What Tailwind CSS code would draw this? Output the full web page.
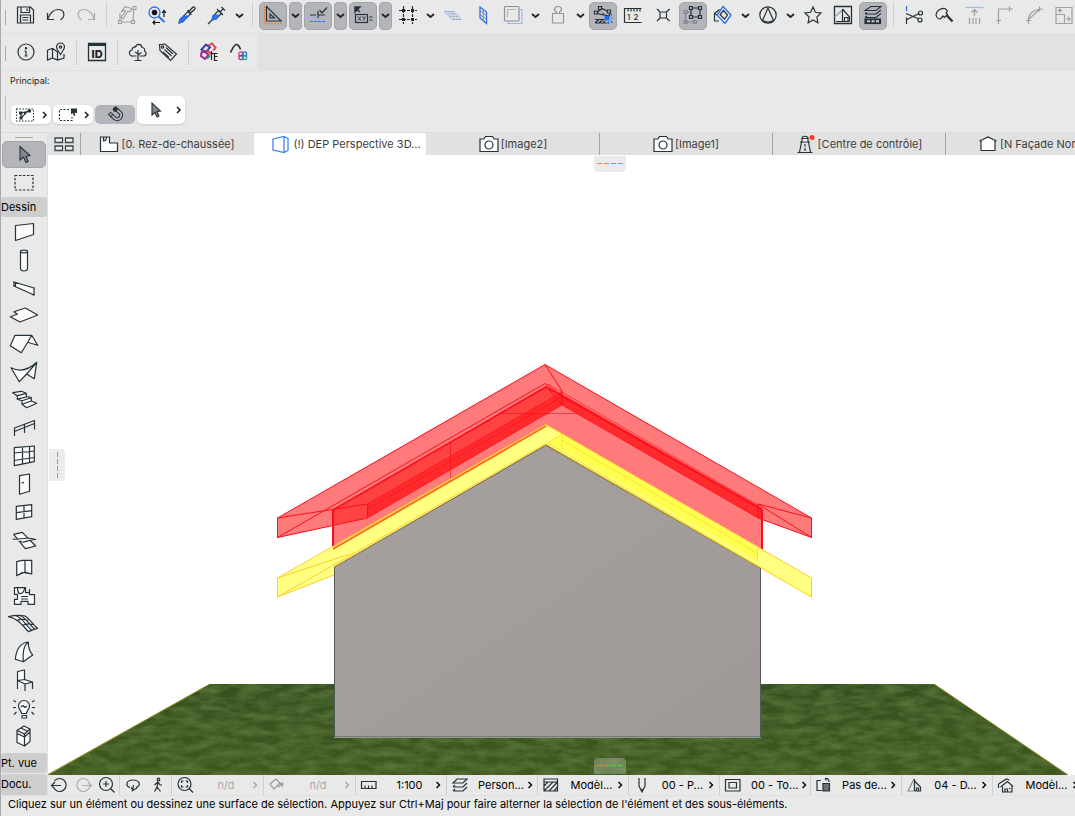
<!DOCTYPE html>
<html lang="fr">
<head>
    <meta charset="UTF-8">
    <meta name="viewport" content="width=device-width, initial-scale=1.0">
    <title>DEP Perspective 3D</title>
    <script src="https://cdn.jsdelivr.net/npm/@tailwindcss/browser@4"></script>
</head>
<body class="h-screen overflow-hidden bg-[#e9e9e9] font-['Inter',sans-serif] text-[11px] leading-4 text-[#262626]">
<div class="flex h-screen flex-col border-l border-[#a9a9ab]">

    <!-- Toolbars -->
    <header class="shrink-0">
        <div id="mainBar" class="flex h-[34px] items-start gap-0.5 overflow-hidden border-b border-[#e1e1e1] pt-0.5 pl-1"></div>
        <div class="flex h-[37px] bg-[#e2e2e2]">
            <div id="subBar" class="flex items-center gap-0.5 border-b border-[#e1e1e1] bg-[#e9e9e9] pt-0.5 pr-1 pl-1"></div>
        </div>
        <div class="flex h-[62px] flex-col justify-between border-b border-[#dcdcdc] pt-0.5 pb-2">
            <p class="pl-[9px] text-[9px] leading-4">Principal:</p>
            <div class="flex items-end">
                <span class="mr-[5px] ml-1 h-6 w-px self-start bg-[#bdbdbd]"></span>
                <div class="flex items-end gap-0.5">
                    <button aria-label="Sélection rapide" class="flex h-[19px] w-10 items-center justify-between rounded-[5px] bg-white pr-px pl-1 shadow-sm">
                        <svg class="h-5 w-5" viewBox="0 0 20 20" fill="none" stroke="#26323a" stroke-width="1.1"><rect x="1.500" y="4" width="17" height="12" stroke-dasharray="1.5 1.5"/><path d="M6 13V8l4-1 5-1M6 13l6-6"/><path d="M4 6.500h3.500v3H4zM12.500 4.500h3.500v3h-3.500zM4.500 11.500h3v3h-3zM9 7h2v2H9z" fill="#26323a" stroke="none"/></svg>
                        <svg class="h-3 w-3" viewBox="0 0 12 12" fill="none" stroke="#222" stroke-width="1.6"><path d="M5 3l3 3-3 3"/></svg>
                    </button>
                    <button aria-label="Zone de sélection" class="flex h-[19px] w-10 items-center justify-between rounded-[5px] bg-white pr-px pl-1 shadow-sm">
                        <svg class="h-5 w-5" viewBox="0 0 20 20" fill="none" stroke="#26323a" stroke-width="1.2"><path d="M12 4.500H2.500v11H15V12" stroke-dasharray="2 1.500"/><path d="M14 3.500h6v5l-1.500-1-2 1.500z" fill="#26323a" stroke="none"/><path d="M14 3.500v6l1.500-1.500 1.500 3 1.500-.8-1.500-2.700h2z" fill="#26323a" stroke="none"/></svg>
                        <svg class="h-3 w-3" viewBox="0 0 12 12" fill="none" stroke="#222" stroke-width="1.6"><path d="M5 3l3 3-3 3"/></svg>
                    </button>
                    <button aria-label="Magnétisme" class="flex h-[19px] w-10 items-center justify-center rounded-[5px] bg-[#b4b5bb]">
                        <svg class="h-5 w-5" viewBox="0 0 20 20" fill="none"><g transform="rotate(-48 10 10)"><path d="M7.500 4.500V12a3.800 3.800 0 0 0 7.600 0V4.500" stroke="#26323a" stroke-width="4"/><path d="M7.500 5.500V12a3.800 3.800 0 0 0 7.600 0V5.500" stroke="#b4b5bb" stroke-width="2"/><path d="M5.500 8h4M13 8h4" stroke="#26323a"/></g><circle cx="10" cy="4.500" r="2.200" fill="#26323a"/></svg>
                    </button>
                    <button aria-label="Flèche" class="flex h-7 w-12 items-center justify-between rounded-[5px] bg-white pr-px pl-2.5 shadow-sm">
                        <svg class="h-5 w-5" viewBox="0 0 20 20" fill="#85888b" stroke="#26323a" stroke-width="1.1"><path d="M5 3v12l3-2.500 2 4.500 2-1-2-4.500 3.500-.5z"/></svg>
                        <svg class="h-3 w-3" viewBox="0 0 12 12" fill="none" stroke="#222" stroke-width="1.6"><path d="M5 3l3 3-3 3"/></svg>
                    </button>
                </div>
            </div>
        </div>
    </header>

    <div class="flex min-h-0 flex-1">
        <!-- Toolbox -->
        <aside class="flex w-[47px] shrink-0 flex-col border-r border-[#dedede]">
            <span class="mt-1 mb-[3px] h-px w-[18px] self-center bg-[#a9a9a9]"></span>
            <button aria-label="Flèche" class="mx-px flex h-[27px] shrink-0 items-center justify-center rounded-[5px] border border-[#a4a5aa] bg-[#b4b5bb]">
                <svg class="h-5 w-5" viewBox="0 0 20 20" fill="#85888b" stroke="#26323a" stroke-width="1.1"><path d="M6 1.500v13.500l3.500-3 2.500 5.500 2.200-1L12 11.500l4-1z"/></svg>
            </button>
            <button aria-label="Zone de sélection" class="flex h-[29px] shrink-0 items-center justify-center">
                <svg class="h-5 w-5" viewBox="0 0 20 20" fill="none" stroke="#26323a" stroke-width="1.2"><rect x="1" y="2.500" width="18" height="14.500" stroke-dasharray="2.500 1.500"/></svg>
            </button>
            <h2 class="h-5 shrink-0 rounded-[3px] bg-[#cecece] leading-5 text-black">Dessin</h2>
            <div id="toolbox" class="flex flex-col pt-px"></div>
            <h2 class="mt-auto mb-px h-5 shrink-0 rounded-[3px] bg-[#cecece] leading-5 text-black">Pt. vue</h2>
            <h2 class="h-[21px] shrink-0 rounded-[3px] bg-[#cecece] leading-5 text-black">Docu.</h2>
        </aside>

        <div class="flex min-w-0 flex-1 flex-col">
            <nav id="tabs" class="flex h-[22px] shrink-0 overflow-hidden bg-[#e1e1e1]"></nav>

            <!-- 3D view -->
            <main class="relative min-h-0 flex-1 bg-white">
                <svg class="h-full w-full" viewBox="48 155 1027 620" preserveAspectRatio="xMidYMax slice" stroke-linejoin="round">
                    <defs>
                        <linearGradient id="ground" x1="0" y1="0" x2="0" y2="1">
                            <stop offset="0" stop-color="#365021"/>
                            <stop offset="1" stop-color="#3e5920"/>
                        </linearGradient>
                        <linearGradient id="gable" x1="0" y1="0" x2="1" y2="1">
                            <stop offset="0" stop-color="#a6a09f"/>
                            <stop offset="1" stop-color="#9f9998"/>
                        </linearGradient>
                        <filter id="grass" x="0" y="0" width="1" height="1">
                            <feTurbulence type="fractalNoise" baseFrequency=".05 .14" numOctaves="4" seed="4"/>
                            <feColorMatrix values="0 0 0 0 .14  0 0 0 0 .24  0 0 0 0 .06  0 1 0 0 -.3"/>
                            <feComposite in2="SourceGraphic" operator="in"/>
                            <feMerge><feMergeNode in="SourceGraphic"/><feMergeNode/></feMerge>
                        </filter>
                    </defs>
                    <path d="M210 684H934L1068 775H48z" fill="url(#ground)" filter="url(#grass)"/>
                    <path d="M48 774.500L210 684M934 684L1068 775" fill="none" stroke="#8b871f"/>

                    <!-- upper roof and gable -->
                    <path d="M277.500 518L545 364.500 811.500 518v19.500L758 518 562 405 367.500 518 277.500 537.500z" fill="#ff7b7b"/>
                    <path d="M333 510L546 386 762 509v40L546 425 333 549z" fill="#ff7b7b"/>
                    <path d="M333 510L546 386 562 396v9L367.500 518 333 525z" fill="#ff4242"/>
                    <path d="M367.500 504L562 392v13L367.500 518z" fill="#ff2a2c"/>
                    <path d="M562 394L762 508v11l-4-1L562 405z" fill="#ff2a2c"/>
                    <g fill="none" stroke="#fc0d1b">
                        <path d="M277.500 518L545 364.500 811.500 518v19.500L758 518M277.500 518v19.500L367.500 518M277.500 537.500L545 383.500 562 395"/>
                        <path d="M277.500 518L367.500 504v14M811.500 537.500L758 504 811.500 518M545 364.500L562 391v14L546 386M758 504v14"/>
                        <path d="M333 510L546 387 762 509.500" stroke-width="1.5"/>
                        <path d="M548 384L758 505M367.500 504L562 392M367.500 509L562 397M450.500 443v35M502 413.500h76" stroke-opacity=".6"/>
                        <path d="M367.500 518L562 405 758 518" stroke-opacity=".7"/>
                        <path d="M333 509.500v40M762 509.500v40" stroke-width="2"/>
                    </g>

                    <!-- lower roof -->
                    <path d="M277.500 578L546 424.500v20L334 566v9L277.500 597z" fill="#ffff80"/>
                    <path d="M277.500 578L546 424.500M277.500 578v19L546 444M277.500 597L334 575M277.500 578L350 554" fill="none" stroke="#ffcc33"/>
                    <path d="M334.500 737V567L546 445 760.500 568v169z" fill="url(#gable)" stroke="#555957"/>
                    <path d="M334 737.500h427" stroke="#8ba08e"/>
                    <path d="M334 566L546 443.500" stroke="#ffe04c" stroke-width="1.5"/>
                    <path d="M546 424.500L811.500 578v19L546 444z" fill="#ffff80"/>
                    <path d="M562 434L757.500 548v13L562 449l-14-6z" fill="#ffff50"/>
                    <path d="M333 549L546 426" stroke="#ff6a24" stroke-width="2"/>
                    <g fill="none" stroke="#ffc82e">
                        <path d="M333 547L546 424.500 811.500 578v19L546 444"/>
                        <path d="M548 443L562 434v15M562 440L757.500 553M757.500 548v13M548 443L811.500 597" stroke="#ffe133"/>
                    </g>
                    <path d="M550 448L758 567" stroke="#9c9a3c" stroke-opacity=".7"/>
                </svg>

                <!-- panel handles over the view -->
                <span class="absolute top-px left-1/2 ml-12 flex h-4 w-8 -translate-x-1/2 items-center justify-center rounded-b-[4px] bg-[#ebebeb]">
                    <svg class="h-1 w-[26px]" viewBox="0 0 26 4" stroke="#f5822f"><path d="M0 1.500h26" stroke-dasharray="5 2"/></svg>
                </span>
                <span class="absolute bottom-px left-1/2 ml-12 flex h-4 w-8 -translate-x-1/2 items-center justify-center rounded-t-[4px] bg-white/25">
                    <svg class="h-1 w-[26px]" viewBox="0 0 26 4" stroke="#f5822f"><path d="M0 1.500h26" stroke-dasharray="5 2"/></svg>
                </span>
                <span class="absolute top-1/2 left-px -mt-4 flex h-8 w-4 items-center justify-center rounded-r-[4px] bg-[#ebebeb]">
                    <svg class="h-[26px] w-1" viewBox="0 0 4 26" stroke="#f5822f"><path d="M2.500 0v26" stroke-dasharray="5 2"/></svg>
                </span>
            </main>

            <!-- Quick options -->
            <div id="quickBar" class="flex h-5 shrink-0 overflow-hidden"></div>
        </div>
    </div>

    <footer class="h-[21px] shrink-0 border-t border-[#e0e0e0] pl-[7px] leading-4 text-black">Cliquez sur un élément ou dessinez une surface de sélection. Appuyez sur Ctrl+Maj pour faire alterner la sélection de l'élément et des sous-éléments.</footer>
</div>

<script>
    const down = '<path d="M3 5l3.500 3L10 5" stroke-width="1.8" stroke="#222"/>';

    // [type, label, drawing]: b button, on pressed button, d drop-down, ond pressed drop-down, s separator
    const mainBar = [
        ['b', 'Enregistrer', '<path d="M1.500 2h13l3 3v13h-16zM5 2v5.500h8.500V2M11 3.500v2.500M4.500 18v-8h10v8M6.500 12.500h6M6.500 15h6"/>'],
        ['b', 'Annuler', '<path d="M1.500 8v6.500H8M1.500 14.500C4 8 7.500 4.500 12 4.500c6.500 0 8 6.500 2.500 10.500"/>'],
        ['b', 'Rétablir', '<path stroke="#a9a9a9" d="M18.500 8v6.500H12M18.500 14.500C16 8 12.500 4.500 8 4.500c-6.500 0-8 6.500-2.500 10.500"/>'],
        ['s'],
        ['b', 'Modifier', '<g stroke="#a0a0a0"><path d="M3 8v9h13L17 3"/><path d="M4 7l4-5 4 .5 3 2-2 2.500-2-1L6 14l-2-1.500L8.500 6 7 5.500z" fill="#e9e9e9"/><path d="M1.500 15.500h3v3h-3zM14.500 15.500h3v3h-3zM16 1.500h3v3h-3z" fill="#e9e9e9"/></g>'],
        ['b', 'Rechercher', '<circle cx="7.500" cy="7.500" r="5.500" stroke="#2f6fe8" stroke-width="1.3"/><path d="M11.500 11.500l6 5.500" stroke="#2f6fe8" stroke-width="2"/><circle cx="7.500" cy="7.500" r="2.800" fill="#111" stroke="none"/><path d="M17 12V6M15 8l2-2.500L19 8M6 17.500h7M8 15.500l-2 2 2 2" stroke="#111"/>'],
        ['b', 'Pipette', '<path d="M2 18l1-3.500 8-8 2.500 2.500-8 8z"/><path d="M2 18l1-3.500 3.500-3.500H11l-5.500 6z" fill="#2f6fe8" stroke="#2f6fe8"/><path d="M10.500 5l4.500 4.500M12 6.500l3.500-4c1.500-1.500 3.500.5 2 2l-4 3.500z" stroke-width="1.3"/>'],
        ['b', 'Seringue', '<path d="M1 19l4-4M5 15l1-4 5.500-5.500 3 3L9 14z"/><path d="M5 15l1-4 2-1h4l-3 4z" fill="#2f6fe8" stroke="#2f6fe8"/><path d="M10 4l6 6M13 7l3.500-3.500M14.500 2l3.500 3.500"/>'],
        ['d', 'Options de transfert'],
        ['s'],
        ['on', 'Lignes guides', '<path d="M1.500 1v17.500h17.500" stroke="#f5822f" stroke-width="1.4" stroke-dasharray="2 1"/><path d="M3.500 1.500v14.500H18z"/><path d="M7 9v4h4.500z"/>'],
        ['ond', 'Options des lignes guides'],
        ['on', 'Accrochage', '<path d="M2 10h6M10 6v7M10 10H17M11.500 5l2.500 3L19 2.500"/><path d="M2 16.500h16" stroke="#2f6fe8" stroke-dasharray="3 1"/>'],
        ['ond', 'Options d’accrochage'],
        ['on', 'Coordonnées', '<path d="M2 2h5L2 7zM3.500 3.500L7 7" fill="#222" stroke-width="1.4"/><rect x="2.500" y="9.500" width="12" height="8"/><path d="M16.500 12h3M16.500 15h3"/><path d="M5 11.500l3 4M8 11.500l-3 4M9.500 11.500l1.500 2 1.500-2M11 13.500v2" stroke-width="1"/>'],
        ['ond', 'Options des coordonnées'],
        ['b', 'Grille', '<path d="M5.500 1v18M14.500 1v18M1 5.500h18M1 14.500h18" stroke-dasharray="3 1"/><path d="M4 4h3v3H4zM13 4h3v3h-3zM4 13h3v3H4zM13 13h3v3h-3z" fill="#222" stroke="none"/>'],
        ['d', 'Options de grille'],
        ['b', 'Plan de travail', '<g stroke-width="1"><path d="M1.500 6.500h9.500l7 8H9z" stroke="#8fb0ec"/><path d="M4 9h9M6.500 11.500h9.500M5 6.500l7 8M8 6.500l7 8" stroke="#b3b8c2"/></g>'],
        ['b', 'Plan vertical', '<path d="M7 2l6.500 5v11.500L7 13z" stroke="#2f6fe8" stroke-width="1.3"/><path d="M10.200 4.500v11M7 5.500l6.500 5M7 9.500l6.500 5" stroke="#7c8795" stroke-width="1"/>'],
        ['b', 'Référence', '<path d="M17 4.500h2v14H5v-2" stroke="#9db8e8"/><rect x="1.500" y="1.500" width="14.500" height="14.500" rx="1" stroke="#8d9195"/><path d="M4.500 12.500V4.500h8" stroke="#b5b5b5"/>'],
        ['d', 'Options de référence'],
        ['b', 'Gravité', '<path d="M4.500 8.500h11V18h-11zM8.500 8.500V7C5 5.500 6.500 1.500 10 1.500S15 5.500 11.500 7v1.500" stroke="#969696"/>'],
        ['d', 'Options de gravité'],
        ['on', 'Édition', '<path d="M3.500 8L9 3.500l8 4-1 3.500-12-2.500M9 9.500l2-1M2 14.500h9.500M2 18h12.500M2 18l4-3.500M6 18l4-3.500M10 18l2-2"/><path d="M1.500 6h3v3h-3zM5.500 1.500h3v3h-3zM14.500 5h3v3h-3z" fill="#b4b5bb"/><path d="M11.500 11h5v4.500h-5z" fill="#1d6ff2" stroke="none"/><path d="M15.500 16.500v2.500M18 13h2M17.500 16l2 2M17.500 10.500l1.500-1.500" stroke="#1d6ff2"/>'],
        ['b', 'Mesurer', '<path d="M1.500 17.500V3.500h17M5 3.500v3M8 3.500v3M11 3.500v3M14 3.500v3M17 3.500v3M1.500 17.500h17"/><text x="4" y="15" font-size="8" font-weight="500" fill="#26323a" stroke="none">1</text><text x="10.500" y="15" font-size="8" font-weight="500" fill="#26323a" stroke="none">2</text>'],
        ['b', 'Point magique', '<rect x="7" y="7" width="6.500" height="6" rx="1"/><path d="M4 4l3 3M16.500 4l-3 3M4 16l3-3M16.500 16l-3-3"/>'],
        ['on', 'Grouper', '<g stroke="#84878b"><path d="M2.500 8v9h10M2.500 7H8"/><path d="M1 5.500h3v3H1zM1 15.500h3v3H1zM10.500 15.500h3v3h-3z"/></g><path d="M8 3h9v9H8z"/><path d="M6.500 1.500h3v3h-3zM15.500 1.500h3v3h-3zM6.500 10.500h3v3h-3zM15.500 10.500h3v3h-3z" fill="#b4b5bb"/>'],
        ['b', 'Coupe 3D', '<path d="M1.500 16V8.500l5-4M1.500 16H6M1.500 8.500L4 10"/><path d="M10 1.500l8 8.500-6 8.500L4 10z" stroke="#2f6fe8" stroke-width="1.4"/><path d="M10.500 5.500l4 4.500-3 4L7 9.500z"/>'],
        ['d', 'Options de coupe'],
        ['b', 'Cône', '<circle cx="10" cy="10" r="8.200"/><path d="M10 3L4.500 15.500C8 17.500 12 17.500 15.500 15.500z"/>'],
        ['d', 'Options de cône'],
        ['b', 'Favoris', '<path d="M10 2l2.400 5.300 5.600.7-4.100 4 1 5.800L10 15l-4.900 2.800 1-5.800L2 8l5.600-.7z"/>'],
        ['b', 'Rendu', '<path d="M1.500 1.500h17v17h-17z" stroke-width="1.3"/><path d="M1.500 12L9 5.500" stroke="#9a9a9a"/><path d="M3 16.500h13.500M9.500 4v12.500M9.500 4l7 8v4.500M11.500 16.500v-4h3.500v4"/>'],
        ['on', 'Calques', '<g stroke-width="1.1"><path d="M2 5.500h11l5-4H8zM2 8.500l2-1M2 9h11l5-4M2 12.500h11l5-4M2 12.500l2-1.500"/></g><rect x="2" y="14" width="15.500" height="4.500" fill="#26323a"/><path d="M4 15.300h3v2H4zM8.500 15.300h3v2h-3zM13 15.300h3v2h-3z" fill="#ccc" stroke="none"/>'],
        ['s'],
        ['b', 'Couper', '<path d="M2.500 1v5" stroke="#2f6fe8"/><path d="M2.500 12.500v6.500M2 8.500L15 14M2 15L15 8.500"/><circle cx="16.500" cy="8" r="2"/><circle cx="16" cy="15" r="2"/>'],
        ['b', 'Hache', '<path d="M2 10C2.500 6 6 3 11 3.500L13.500 6 12 8l1.500 1.500-3 3L9 11 6.500 14C4 14 2.500 12.500 2 10z"/><path d="M12.500 10l6 6.500" stroke-width="2.4"/>'],
        ['b', 'Ajuster', '<path d="M1.500 2.500h18" stroke="#9db8e8"/><path d="M10.500 11V4.500M7.500 7.500l3-3 3 3M5.500 13v6M9 13v6M12 13v6M15.500 13v6" stroke="#a0a0a0"/>'],
        ['b', 'Intersection', '<path d="M4.500 19V4H19M2 15.500h5M15.500 1.500v5" stroke="#a0a0a0"/>'],
        ['b', 'Raccord', '<path d="M4.500 19v-4C4.500 9 9 4 19 4M2 15.500h5M15.500 1.500v5M5 14L16 4" stroke="#a0a0a0"/>'],
        ['b', 'Redimensionner', '<path d="M2 2.500h16v16H2zM2 9.500h8.500v9M6 8V4M4 6l2-2 2 2M12 14h4M14 12l2 2-2 2" stroke="#a0a0a0"/>']
    ];

    const subBar = [
        ['b', 'Informations', '<circle cx="10" cy="10" r="8"/><path d="M10 9v5M8.500 9H10M8.500 14h3"/><circle cx="10" cy="6.200" r=".6" fill="#26323a"/>'],
        ['b', 'Localisation', '<path d="M1.500 8L6.500 6.500 11 9.500h1M1.500 8v10l5-2 5 2 6.500-2v-4M6.500 6.500V16M11.500 9.500V18"/><path d="M14.500 12.500C12 8.500 10.500 7 10.500 5a4 4 0 0 1 8 0c0 2-1.500 3.500-4 7.500z"/><circle cx="14.500" cy="5" r="1.200"/>'],
        ['s'],
        ['b', 'Identifiant', '<path d="M1.500 1.500h17v17h-17z" stroke-width="1.300"/><path d="M1.500 3h17" stroke-width="2"/><text x="4.500" y="15.500" font-size="11" font-weight="800" fill="#222" stroke="none">ID</text>'],
        ['s'],
        ['b', 'Arbre', '<path d="M8.500 14H5a3 3 0 0 1-1-6c0-2 2-3.500 3.500-3 1-3.500 6-3.500 6.500.5 2.500 0 3 2 2.500 3.500 2.500 1 2 5-1 5h-4"/><path d="M10 8v10M10 12l-3-2M10 13l3.500-2.500M6.500 18.500h7"/>'],
        ['b', 'Étiquette', '<path d="M1.500 2.500L7 2l11.500 10-6 6.500L2 8.500z"/><circle cx="4.500" cy="5" r="1.200"/><path d="M8 5.500l7 6.500M6.500 7.500l7 6.500M5 10l6 5.500"/>'],
        ['s'],
        ['b', 'Structure', '<g stroke-width="2"><path d="M2.500 7.500l4.500-5 4 3-4.500 5z" stroke="#3a3f9e"/><path d="M9.500 3.500l3.500-2 3.500 4-2 3" stroke="#e8404e"/><path d="M2.500 10.500L2 14l4 3 3.500-4L6 9z" stroke="#a52a8e"/><path d="M8 8l4 4" stroke="#e8404e"/><path d="M8 16.500l3-3" stroke="#1d9a9a"/></g><path d="M12.500 9v9M12.500 11.500h6M15.500 11.500v7h3M15.500 14.500h3" stroke="#222"/>'],
        ['b', 'Paramétrique', '<path d="M1.500 10.500C3.500 7 5 2.500 7.500 2.500S10 4 11.500 7.500" stroke-width="1.6"/><g stroke-width="1.2"><circle cx="12" cy="12" r="2.200" stroke="#e8404e"/><circle cx="15.500" cy="12" r="2.200" stroke="#2f6fe8"/><circle cx="12" cy="15.500" r="2.200" stroke="#a52a8e"/><circle cx="15.500" cy="15.500" r="2.200" stroke="#1d9a9a"/></g>']
    ];

    function renderBar(id, items) {
        const handle = '<span class="mr-1 h-[15px] w-px shrink-0 self-center bg-[#a9a9a9]"></span>';
        document.getElementById(id).innerHTML = handle + items.map(([type, label, art]) => {
            if (type === 's') return '<span class="flex h-6 w-[9px] shrink-0 justify-center"><i class="h-full w-px bg-[#cfcfcf]"></i></span>';
            const pressed = type.startsWith('on') ? 'border-[#a4a5aa] bg-[#b4b5bb]' : 'border-transparent';
            if (type.endsWith('d')) return `<button aria-label="${label}" class="flex h-7 w-[13px] shrink-0 items-center justify-center rounded-[4px] border pb-0.5 ${pressed}"><svg class="h-[13px] w-[13px] shrink-0" viewBox="0 0 13 13" fill="none">${down}</svg></button>`;
            return `<button aria-label="${label}" class="flex h-7 w-7 shrink-0 items-center justify-center rounded-[5px] border pb-0.5 ${pressed}"><svg class="h-5 w-5 shrink-0" viewBox="0 0 20 20" fill="none" stroke="#26323a" stroke-width="1.2">${art}</svg></button>`;
        }).join('');
    }

    const tools = [
        ['Mur', '<path d="M7.500 7.500L25.500 5.500v11L7.500 22.500z"/>'],
        ['Poteau', '<path d="M12.500 5.500V22c0 4 7 4 7 0V5.500"/><ellipse cx="16" cy="5.500" rx="3.500" ry="1.300"/>'],
        ['Poutre', '<path d="M6 8l20 6v7L6 12zM5 8h2M5 12h3M24.500 14H27M24.500 21H27M7.500 8.500v4"/>'],
        ['Dalle', '<path d="M2.300 14.700l7-2.400L6 9.700 17.300 6l12.400 7L12 20z"/>'],
        ['Toit', '<path d="M7 5.300h16.700l6 10-10-3-6.400 10.400-11-7zM23.700 5.300l-4 7"/>'],
        ['Coque', '<path d="M3 9.700c8 4 17 3 25.700-5.400l-2.400 16.400-7.600-4.700-7.400 7.700zM28.700 4.300l-10 11.700"/>'],
        ['Escalier', '<path d="M4.700 6.700l8.600-1.400 5 2-9 2.400zM9.300 9.700v3.500l9-2.200V7.300M9.300 13.200l4.700 1.500 9.300-3-5-1.200M14 14.700v3.600l9.300-3.300v-3.300M14 18.300l4.700 3.400 10-4.400-5.400-2.300"/>'],
        ['Garde-corps', '<path d="M6.500 22v-8L26.500 6.500v9M6.500 17.500L26.500 9.500M16.500 10v9" fill="none"/>'],
        ['Mur-rideau', '<path d="M6.300 5.700L26.300 4v15.700l-20 4zM14.500 5v17M21.500 4.500v16M6.300 11l20-2M6.300 18.500l20-3"/>'],
        ['Porte', '<path d="M11.500 5.700l10-1.700v17.300l-10 3zM13.500 13l2.500-.7"/>'],
        ['Fenêtre', '<path d="M8.300 8.300L23.700 6.700v12L8.300 21.300zM16 7.500v12.500M8.300 14.700l15.400-2"/>'],
        ['Lucarne', '<path d="M5.700 8.300l8.600-2 13.400 13.700-10.400 2.700z"/><path d="M4.700 13c7 1.500 12-3 23 .5-8-.5-12 5-16 1.500"/>'],
        ['Fenêtre d’angle', '<path d="M8.700 7.700l5.600-1.400h9.400V20l-9.400-1.500-5.600 3.200zM17 6.300v11.500M8.700 21.700L17 18l6.700 2"/>'],
        ['Zone', '<path d="M6.500 5.700h11v5h4v-3h0v5h5v9.600h-6.500v-3h-7v3H6.500v-5h3v-5h-3z"/><path d="M9.500 5.700c0 4 1.500 6 3 6s4-2 4-6M13 14.500h7M13 17h7" fill="none"/>'],
        ['Maillage', '<path d="M.5 6.700C7 5 12 5 17 6c5 3 8 9 12.500 12.300-4 .7-6 2-9 3.400C15 16 10 8.500.5 6.700z"/><path d="M8.500 10.500c4-1.500 8-1.500 12-.5M14 15.500c4-2 7-2 11-1M7.500 5.500c7 2 9 9 16 14.500M12 5.500c6 2 8 8 14.500 13.500" fill="none"/>'],
        ['Forme', '<path d="M20.300 4c-8 1-12 6-13 17.300l8 2.400 9.400-6.700c-3-3-4.400-7-4.400-13zM20.300 4c-5 4-6 10-5 19.700"/>'],
        ['Objet', '<path d="M9.500 23V5.500l7-1.500v10M9.500 14.500l7-1 8 2.500-7.500 2zM17 18v7M24.500 16v7M9.500 14.500L17 18"/>'],
        ['Lampe', '<path d="M13.500 19.500c0-3-3-4-3-7.500a5.500 5.500 0 0 1 11 0c0 3.500-3 4.500-3 7.500z"/><path d="M14 21.500h4.500v2.500H14zM13 13l2-1.500 2 2 2-1.500M8 8L5.500 6.500M24 8l2.500-1.500M8 13.500H5M24 13.500h3M8.500 18L6 20.500M23.500 18l2.500 2.500"/>'],
        ['Équipement', '<path d="M9 8.500l7-4.500 6 3v12.500l-5.500 4.500L9 20.500zM9 8.500l7.500 3.500 5.500-5M16.500 12v12M9 11.500l7.500 3.500 5.500-5M13 6l6 3"/>']
    ];
    document.getElementById('toolbox').innerHTML = tools.map(([label, art]) =>
        `<button aria-label="${label}" class="flex h-7 items-center justify-center"><svg class="h-7 w-8" viewBox="0 0 32 28" fill="#fafafa" stroke="#26323a" stroke-width="1.2" stroke-linejoin="round">${art}</svg></button>`
    ).join('');

    const camera = '<path d="M1 5h4l1.500-2.500h7L15 5h4v12.500H1z"/><circle cx="10" cy="11" r="4"/>';
    const tabs = [
        ['[0. Rez-de-chaussée]', '<path d="M1.500 3h9v6h8v8.500h-17zM4.500 3v4c2 0 3-1.500 3-4"/>'],
        ['(!) DEP Perspective 3D...', '<path d="M2 5l11-2.500v16L2 16zM13 2.500l4 2v12l-4 2" stroke="#2f78e8"/>'],
        ['[Image2]', camera],
        ['[Image1]', camera],
        ['[Centre de contrôle]', '<path d="M5.500 8.500L3.500 18M12.500 8.500l2 9.500M1.500 18.500h15M4 8h10M6 8V4.500h6V8M6 4.500c0-3 6-3 6 0M9 10v2.500M9 14v3"/><circle cx="16" cy="3.500" r="2.500" fill="#fb3b22" stroke="none"/>'],
        ['[N Façade Nord]', '<path d="M1.500 7L10 3l8.500 4H17v9.500H3V7z"/>']
    ];
    document.getElementById('tabs').innerHTML =
        '<button aria-label="Vue d’ensemble des onglets" class="flex w-8 shrink-0 items-center justify-center"><svg class="h-5 w-5" viewBox="0 0 20 20" fill="#eee" stroke="#3c464b" stroke-width="1.3"><path d="M1 4h7.500v4.500H1zM11.500 4H19v4.500h-7.500zM1 12h7.500v4.500H1zM11.500 12H19v4.500h-7.500z"/></svg></button>' +
        tabs.map(([name, art], i) => {
            const look = i === 1 ? 'bg-white border-[#e1e1e1] pl-3' : i === 2 ? 'border-transparent' : 'border-[#a2a2a2]';
            return `<a href="#" class="flex w-[173px] shrink-0 items-center justify-center gap-0.5 border-l whitespace-nowrap text-[#3d3d3d] ${look}"><svg class="h-5 w-5" viewBox="0 0 20 20" fill="#fff" stroke="#26323a" stroke-width="1.2">${art}</svg>${name}</a>`;
        }).join('');

    const nav = [
        [['Zoom précédent', '<path d="M4.500 6a6.500 6.500 0 1 1 0 8M1.500 10.500H11M5 7l-3.500 3.500L5 14"/>'],
         ['Zoom suivant', '<path d="M15.500 6a6.500 6.500 0 1 0 0 8M18.500 10.500H9M15 7l3.500 3.500L15 14" stroke="#aaa"/>'],
         ['Zoom avant', '<circle cx="9" cy="9" r="6.500"/><path d="M9 6v6M6 9h6M13.500 13.500l4 4"/>']],
        [['Orbite', '<path d="M7 12.500C2 11 3 5 10 5s8.500 6 3 7.500M10.500 10l-1 5.500 4.500-2.500M10.500 15.500L8 12.500"/>'],
         ['Explorer', '<circle cx="10.500" cy="4.500" r="1.300"/><path d="M10 7l-1 5-2.500 4.500M9 12l3.500 4.500M6.500 10L10 7l2 3h2"/>']]
    ];
    const options = [
        ['n/d', '<circle cx="9.500" cy="9" r="6.500"/><path d="M14 13.500l4 4M6.500 8V6H8.500M12.500 8V6h-2M6.500 10v2h2M12.500 10v2h-2"/>'],
        ['n/d', '<path d="M3 9l6-5 4 4-6 6zM11 9l5-1M16 8l-1 4M11 12l5-4" stroke="#999"/>'],
        ['1:100', '<path d="M2.500 6.500h14.500v7H2.500zM6 13.500v-3M9.500 13.500v-3M13 13.500v-3"/>'],
        ['Person...', '<path d="M3 8l4-4h10l-4 4zM3 12h10l4-4M3 16h10l4-4M3 12l2-2M3 16l2-2"/>'],
        ['Modèl...', '<path d="M3 4h13.500v12H3zM3 7h13.500M3 11l4-4M3 16l9-9M8 16l8.500-9M13 16l3.500-4"/>'],
        ['00 - P...', '<path d="M7 3v8l3 6 3-6V3M10 17v-3"/>'],
        ['00 - To...', '<path d="M2.500 4.500h14.500v11.500H2.500zM6 7.500h7.500V13H6z"/>'],
        ['Pas de...', '<path d="M8 15.500H3v-10h4M11 3.500c3-.5 4 1 4 3.500M11 3.500l1.500 2"/><path d="M9 8.500h6.500V16H9z" fill="#6c7176"/>'],
        ['04 - D...', '<path d="M9 4L3 16h6" stroke="#8c8c8c"/><path d="M9.500 4v12M9.500 6l6 6v4h-6M11.500 16v-3h2v3"/>'],
        ['Modèl...', '<path d="M2.500 9l8-5 3 1M2.500 9v4M4.500 12l7-5.500 5.500 5M6.500 11.500V17h9.500v-6M9 17v-3h2.500v3M13 13.500h1.500"/>']
    ];
    document.getElementById('quickBar').innerHTML = nav.map((group, i) =>
        `<div class="flex shrink-0 items-center justify-around border-r border-[#cfcfcf] ${i ? 'w-[52px]' : 'w-[72px]'}">` + group.map(([label, art]) =>
            `<button aria-label="${label}"><svg class="h-5 w-5" viewBox="0 0 20 20" fill="none" stroke="#26323a" stroke-width="1.2">${art}</svg></button>`).join('') + '</div>'
    ).join('') + options.map(([text, art]) => {
        const tone = text === 'n/d' ? 'w-[92px] text-[#a9a9a9]' : 'w-[91px] text-black';
        return `<button class="flex shrink-0 items-center border-r border-[#cfcfcf] pl-[3px] ${tone}"><svg class="h-5 w-5 shrink-0" viewBox="0 0 20 20" fill="none" stroke="#26323a" stroke-width="1.2">${art}</svg><span class="flex-1 pl-2 text-center whitespace-nowrap">${text}</span><svg class="mr-0.5 h-3 w-3 shrink-0" viewBox="0 0 12 12" fill="none" stroke="currentColor" stroke-width="1.4"><path d="M4.500 3l3 3-3 3"/></svg></button>`;
    }).join('');

    renderBar('mainBar', mainBar);
    renderBar('subBar', subBar);
</script>
</body>
</html>
